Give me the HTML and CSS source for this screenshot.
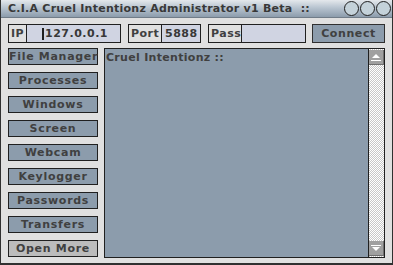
FILE: index.html
```html
<!DOCTYPE html>
<html lang="en">
<head>
  <meta charset="UTF-8" />
  <title>C.I.A Cruel Intentionz Administrator v1 Beta</title>
  <link rel="stylesheet" href="styles.css">
</head>
<body>
  <div class="window">
    <div class="titlebar">
      <span class="title">C.I.A Cruel Intentionz Administrator v1 Beta&nbsp; ::</span>
      <div class="title-buttons">
        <span class="circle"></span>
        <span class="circle"></span>
        <span class="circle"></span>
      </div>
    </div>

    <div class="toolbar">
      <div class="field field-ip">
        <span class="label">IP</span>
        <span class="input"><span class="caret"></span>127.0.0.1</span>
      </div>
      <div class="field field-port">
        <span class="label">Port</span>
        <span class="input">5888</span>
      </div>
      <div class="field field-pass">
        <span class="label">Pass</span>
        <span class="input"></span>
      </div>
      <button class="connect">Connect</button>
    </div>

    <div class="main">
      <div class="menu">
        <button class="menu-btn">File Manager</button>
        <button class="menu-btn">Processes</button>
        <button class="menu-btn">Windows</button>
        <button class="menu-btn">Screen</button>
        <button class="menu-btn">Webcam</button>
        <button class="menu-btn">Keylogger</button>
        <button class="menu-btn">Passwords</button>
        <button class="menu-btn">Transfers</button>
        <button class="menu-btn more">Open More</button>
      </div>

      <div class="console">
        <div class="console-text">Cruel Intentionz ::</div>
        <div class="scrollbar">
          <div class="scroll-btn">
            <svg width="12" height="12" viewBox="0 0 12 12">
              <polygon points="2,7 6,3 10,7" fill="#ffffff"/>
              <rect x="1" y="9" width="10" height="1" fill="#ffffff"/>
            </svg>
          </div>
          <div class="scroll-track"></div>
          <div class="scroll-btn">
            <svg width="12" height="12" viewBox="0 0 12 12">
              <rect x="1" y="3" width="10" height="1" fill="#ffffff"/>
              <polygon points="2,5 10,5 6,9" fill="#ffffff"/>
            </svg>
          </div>
        </div>
      </div>
    </div>
  </div>
</body>
</html>
```

FILE: styles.css
```css
body {
  margin: 0;
  background: #e0e0e0;
  font-family: "DejaVu Sans", Verdana, sans-serif;
  color: #404040;
}

.window {
  width: 393px;
  height: 265px;
  box-sizing: border-box;
  border-left: 1px solid #303030;
  border-right: 1px solid #303030;
  border-bottom: 2px solid #303030;
  background: #e0e0e0;
}

.titlebar {
  height: 17px;
  display: flex;
  align-items: center;
  justify-content: space-between;
  padding: 0 0 0 7px;
  background: linear-gradient(#e4e8ec 0%, #b8c4d0 45%, #8c9cac 100%);
  border-bottom: 1px solid #707c88;
}

.title {
  font-size: 11px;
  font-weight: bold;
  letter-spacing: 0.25px;
  color: #383838;
  white-space: nowrap;
}

.title-buttons {
  display: flex;
  gap: 1px;
  padding-right: 1px;
}

.circle {
  width: 13px;
  height: 13px;
  border-radius: 50%;
  border: 1px solid #202020;
  background: #c4d2da;
}

.toolbar {
  display: flex;
  gap: 7px;
  margin: 6px 0 0 7px;
  height: 19px;
}

.field {
  display: flex;
  border: 1px solid #202020;
  box-sizing: border-box;
  font-size: 11px;
  font-weight: bold;
  letter-spacing: 0.5px;
  white-space: nowrap;
}

.label {
  display: flex;
  align-items: center;
  flex-shrink: 0;
  padding: 0 2px;
  border-right: 1px solid #202020;
}

.input {
  display: flex;
  align-items: center;
  background: #d0d4e2;
  padding-left: 4px;
  color: #383838;
  overflow: hidden;
}

.field-ip { width: 113px; }
.field-ip .label { width: 13px; }
.field-ip .input { flex: 1; padding-left: 15px; }

.field-port { width: 73px; }
.field-port .label { width: 28px; }
.field-port .input { flex: 1; padding-left: 3px; }

.field-pass { width: 98px; }
.field-pass .label { width: 28px; }
.field-pass .input { flex: 1; }

.caret {
  display: inline-block;
  width: 2px;
  height: 12px;
  background: #202020;
  margin-right: 1px;
}

.connect {
  width: 73px;
  margin-left: -1px;
  background: #8c9cac;
  border: 1px solid #303030;
  font-family: inherit;
  font-size: 11px;
  font-weight: bold;
  letter-spacing: 0.6px;
  color: #404040;
  padding: 0;
}

.main {
  display: flex;
  gap: 6px;
  margin: 5px 0 0 7px;
}

.menu {
  display: flex;
  flex-direction: column;
  gap: 7px;
}

.menu-btn {
  width: 90px;
  height: 17px;
  padding: 0;
  background: #8c9cac;
  border: 1px solid #202020;
  font-family: inherit;
  font-size: 11px;
  font-weight: bold;
  letter-spacing: 0.7px;
  white-space: nowrap;
  color: #404040;
}

.menu-btn.more {
  background: #bcbcbc;
}

.console {
  width: 281px;
  height: 210px;
  box-sizing: border-box;
  border: 1px solid #202020;
  background: #8c9cac;
  display: flex;
}

.console-text {
  flex: 1;
  padding: 2px 1px;
  font-size: 11px;
  font-weight: bold;
  letter-spacing: 0.3px;
  color: #404040;
  border-right: 1px solid #202020;
}

.scrollbar {
  width: 15px;
  display: flex;
  flex-direction: column;
  background-color: #ffffff;
  background-image: repeating-conic-gradient(#c8c8c8 0 25%, #ffffff 0 50%);
  background-size: 2px 2px;
}

.scroll-track {
  flex: 1;
}

.scroll-btn {
  height: 14px;
  margin: 1px 0;
  background: #a0a0a0;
  border-right: 1px solid #707070;
  border-bottom: 1px solid #707070;
  display: flex;
  align-items: center;
  justify-content: center;
}
```
